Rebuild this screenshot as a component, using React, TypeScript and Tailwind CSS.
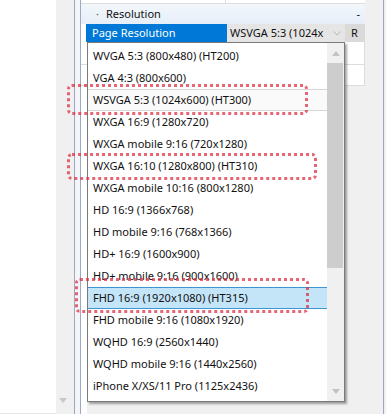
import React from 'react';

const ITEMS = [
  'WVGA 5:3 (800x480) (HT200)',
  'VGA 4:3 (800x600)',
  'WSVGA 5:3 (1024x600) (HT300)',
  'WXGA 16:9 (1280x720)',
  'WXGA mobile 9:16 (720x1280)',
  'WXGA 16:10 (1280x800) (HT310)',
  'WXGA mobile 10:16 (800x1280)',
  'HD 16:9 (1366x768)',
  'HD mobile 9:16 (768x1366)',
  'HD+ 16:9 (1600x900)',
  'HD+ mobile 9:16 (900x1600)',
  'FHD 16:9 (1920x1080) (HT315)',
  'FHD mobile 9:16 (1080x1920)',
  'WQHD 16:9 (2560x1440)',
  'WQHD mobile 9:16 (1440x2560)',
  'iPhone X/XS/11 Pro (1125x2436)',
];

const CURRENT = 2;
const HOVER = 11;

function Tri({ down = false, color = '#a6a6a6' }: { down?: boolean; color?: string }) {
  return (
    <svg width="8" height="5" viewBox="0 0 8 5">
      <polygon points={down ? '0,0 8,0 4,5' : '0,5 8,5 4,0'} fill={color} />
    </svg>
  );
}

function Chevron() {
  return (
    <svg width="8" height="5" viewBox="0 0 8 5">
      <polyline points="0.5,0.5 4,4 7.5,0.5" fill="none" stroke="#b5b5b5" strokeWidth="1" />
    </svg>
  );
}

// hand-drawn red marker box on top of the screenshot
function Mark({ className }: { className: string }) {
  return (
    <div
      className={`absolute rounded-[5px] border-[3px] border-dotted border-[#dc3346]/75 ${className}`}
    />
  );
}

export default function App() {
  return (
    <div
      className="relative flex w-[386px] h-[414px] overflow-hidden bg-white text-[11px] text-[#111]"
      style={{ fontFamily: "'Segoe UI', 'Noto Sans', 'Open Sans', sans-serif" }}
    >
      {/* blank area on the left */}
      <div className="w-[56px] h-full bg-white border-b border-[#e6e6e6]" />

      {/* left gutter */}
      <div className="w-[18px] h-full bg-[#f0f0f0] flex flex-col justify-end items-center pb-[11px] pr-[4px]">
        <Tri down color="#c8c8c8" />
      </div>
      <div className="w-px h-full bg-[#9ea8bf]" />
      <div className="w-[5px] h-full bg-[#f4f5f8]" />
      <div className="w-px h-full bg-[#9ea8bf]" />

      {/* property grid */}
      <div className="w-[284px] h-full flex flex-col">
        <div className="h-[4px] flex border-b border-[#dcdcdc]">
          <div className="w-[145px] border-r border-[#dcdcdc]" />
          <div className="flex-1" />
        </div>

        <div className="h-[20px] flex items-center bg-gradient-to-b from-[#f3f7fc] to-[#e6eef8] pl-[15px] pr-[5px]">
          <span className="w-[10px] text-[#555]">·</span>
          <span>Resolution</span>
          <span className="ml-auto">-</span>
        </div>

        <div className="h-[18px] flex">
          <div className="w-[5px] bg-white" />
          <div className="w-[141px] bg-[#0078d7] text-white flex items-center pl-[6px]">Page Resolution</div>
          <div className="w-[118px] bg-[#e5e5e5] flex items-center pl-[3px] pr-[4px] whitespace-nowrap">
            <span className="flex-1">WSVGA 5:3 (1024x</span>
            <Chevron />
          </div>
          <div className="w-[20px] bg-[#dadada] flex items-center pl-[6px]">R</div>
        </div>

        <div className="h-[23px] bg-white border-b border-r border-[#dcdcdc]" />
        <div className="h-[21px] bg-white border-b border-r border-[#dcdcdc]" />

        <div className="flex-1 flex">
          <div className="w-[6px] bg-white" />
          <div className="flex-1 bg-[#f0f0f0]" />
        </div>
      </div>

      {/* right gutter */}
      <div className="w-[18px] h-full bg-[#f0f0f0]" />
      <div className="w-px h-full bg-[#9ea8bf]" />
      <div className="flex-1 h-full bg-[#f0f0f0]" />

      {/* dropdown list */}
      <div className="absolute left-[87px] top-[42px] w-[258px] h-[360px] flex border border-[#7a7a7a] bg-white shadow-[2px_2px_2px_rgba(0,0,0,0.35)]">
        <div className="flex-1 pt-[2px]">
          {ITEMS.map((item, i) => (
            <div
              key={item}
              className={`h-[22px] flex items-center pl-[5px] whitespace-nowrap ${
                i === HOVER
                  ? 'bg-[#c4e4f8] border-y border-[#3a97d4]'
                  : i === CURRENT
                  ? 'bg-[#fafafa] border-y border-[#d7d7d7]'
                  : ''
              }`}
            >
              {item}
            </div>
          ))}
        </div>
        <div className="w-[17px] bg-[#f0f0f0] flex flex-col items-center">
          <div className="h-[20px] flex items-center justify-center">
            <Tri color="#c2c2c2" />
          </div>
          <div className="w-[16px] ml-[-1px] h-[205px] bg-[#cdcdcd]" />
          <div className="flex-1" />
          <div className="h-[20px] flex items-center justify-center">
            <Tri down color="#c2c2c2" />
          </div>
        </div>
      </div>

      <Mark className="left-[67px] top-[84px] w-[241px] h-[31px]" />
      <Mark className="left-[67px] top-[153px] w-[250px] h-[27px]" />
      <Mark className="left-[75px] top-[278px] w-[234px] h-[35px]" />
    </div>
  );
}
